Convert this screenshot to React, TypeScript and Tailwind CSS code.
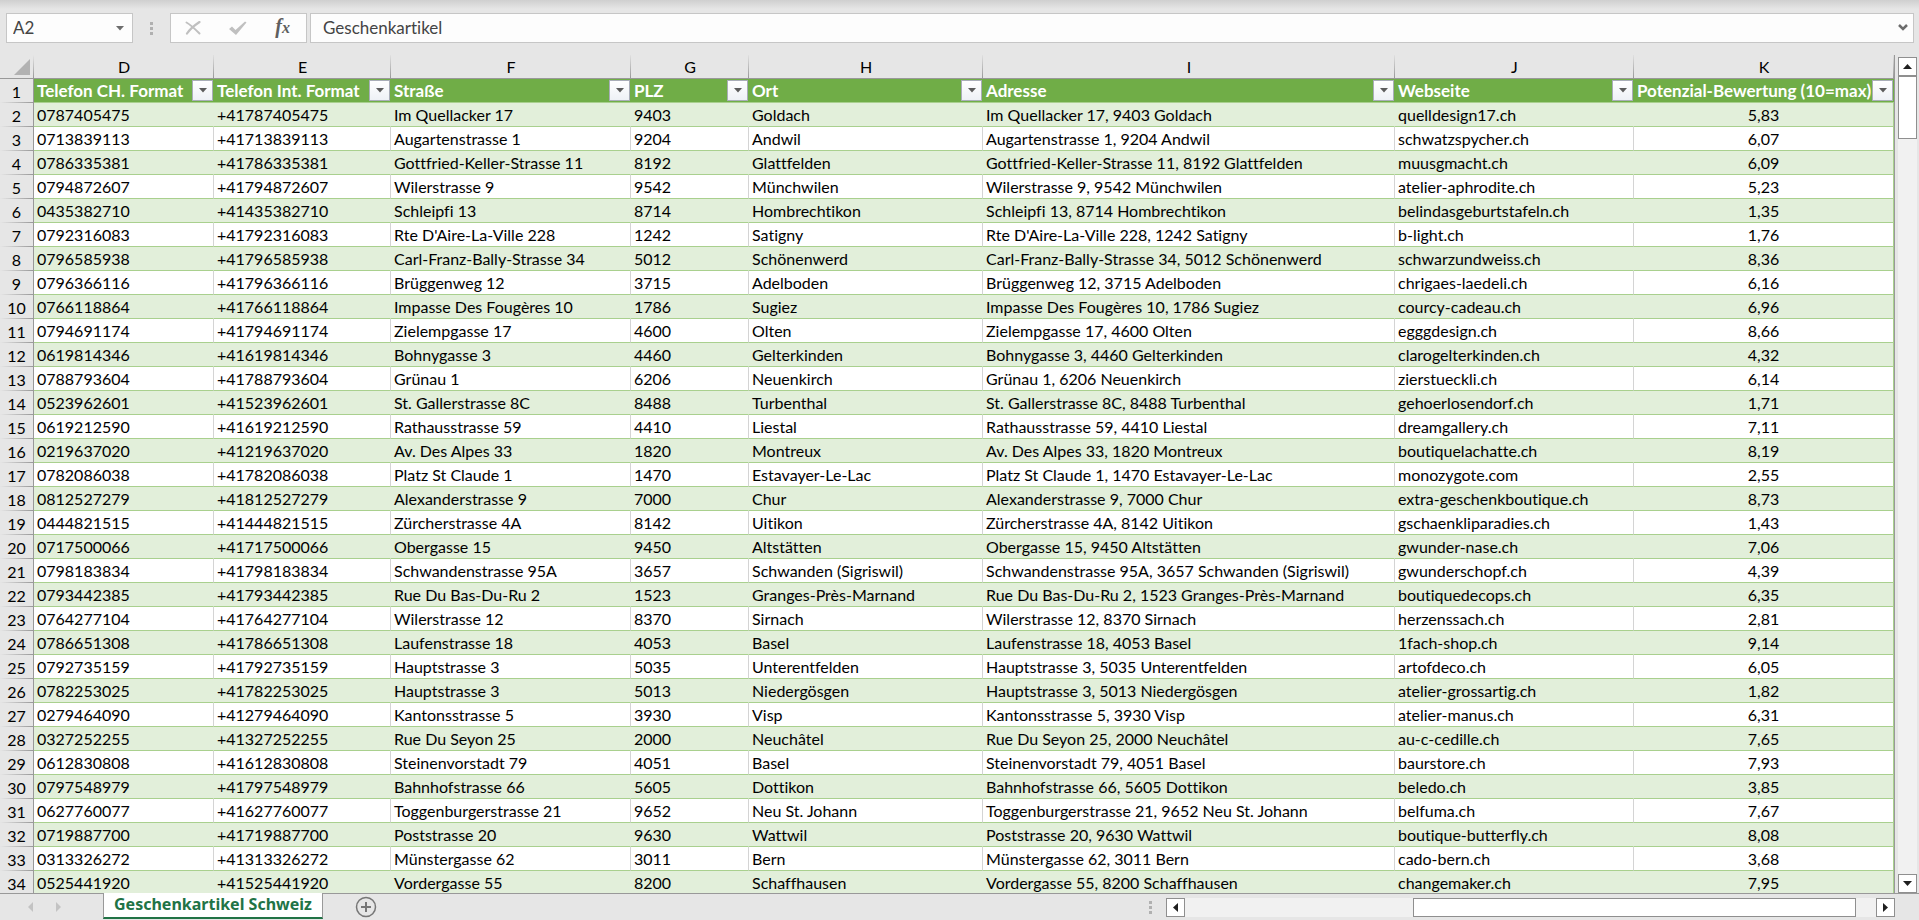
import type { ReactNode } from 'react';

const COLUMNS: { id: string; label: string; width: string }[] = [
  { id: 'D', label: 'Telefon CH. Format', width: 'w-[180px]' },
  { id: 'E', label: 'Telefon Int. Format', width: 'w-[177px]' },
  { id: 'F', label: 'Straße', width: 'w-[240px]' },
  { id: 'G', label: 'PLZ', width: 'w-[118px]' },
  { id: 'H', label: 'Ort', width: 'w-[234px]' },
  { id: 'I', label: 'Adresse', width: '' },
  { id: 'J', label: 'Webseite', width: 'w-[239px]' },
  { id: 'K', label: 'Potenzial-Bewertung (10=max)', width: 'w-[260px]' },
];

// phone without the leading zero, street, postcode, town, website, rating
const SHOPS: [string, string, string, string, string, string][] = [
  ['787405475', 'Im Quellacker 17', '9403', 'Goldach', 'quelldesign17.ch', '5,83'],
  ['713839113', 'Augartenstrasse 1', '9204', 'Andwil', 'schwatzspycher.ch', '6,07'],
  ['786335381', 'Gottfried-Keller-Strasse 11', '8192', 'Glattfelden', 'muusgmacht.ch', '6,09'],
  ['794872607', 'Wilerstrasse 9', '9542', 'Münchwilen', 'atelier-aphrodite.ch', '5,23'],
  ['435382710', 'Schleipfi 13', '8714', 'Hombrechtikon', 'belindasgeburtstafeln.ch', '1,35'],
  ['792316083', "Rte D'Aire-La-Ville 228", '1242', 'Satigny', 'b-light.ch', '1,76'],
  ['796585938', 'Carl-Franz-Bally-Strasse 34', '5012', 'Schönenwerd', 'schwarzundweiss.ch', '8,36'],
  ['796366116', 'Brüggenweg 12', '3715', 'Adelboden', 'chrigaes-laedeli.ch', '6,16'],
  ['766118864', 'Impasse Des Fougères 10', '1786', 'Sugiez', 'courcy-cadeau.ch', '6,96'],
  ['794691174', 'Zielempgasse 17', '4600', 'Olten', 'egggdesign.ch', '8,66'],
  ['619814346', 'Bohnygasse 3', '4460', 'Gelterkinden', 'clarogelterkinden.ch', '4,32'],
  ['788793604', 'Grünau 1', '6206', 'Neuenkirch', 'zierstueckli.ch', '6,14'],
  ['523962601', 'St. Gallerstrasse 8C', '8488', 'Turbenthal', 'gehoerlosendorf.ch', '1,71'],
  ['619212590', 'Rathausstrasse 59', '4410', 'Liestal', 'dreamgallery.ch', '7,11'],
  ['219637020', 'Av. Des Alpes 33', '1820', 'Montreux', 'boutiquelachatte.ch', '8,19'],
  ['782086038', 'Platz St Claude 1', '1470', 'Estavayer-Le-Lac', 'monozygote.com', '2,55'],
  ['812527279', 'Alexanderstrasse 9', '7000', 'Chur', 'extra-geschenkboutique.ch', '8,73'],
  ['444821515', 'Zürcherstrasse 4A', '8142', 'Uitikon', 'gschaenkliparadies.ch', '1,43'],
  ['717500066', 'Obergasse 15', '9450', 'Altstätten', 'gwunder-nase.ch', '7,06'],
  ['798183834', 'Schwandenstrasse 95A', '3657', 'Schwanden (Sigriswil)', 'gwunderschopf.ch', '4,39'],
  ['793442385', 'Rue Du Bas-Du-Ru 2', '1523', 'Granges-Près-Marnand', 'boutiquedecops.ch', '6,35'],
  ['764277104', 'Wilerstrasse 12', '8370', 'Sirnach', 'herzenssach.ch', '2,81'],
  ['786651308', 'Laufenstrasse 18', '4053', 'Basel', '1fach-shop.ch', '9,14'],
  ['792735159', 'Hauptstrasse 3', '5035', 'Unterentfelden', 'artofdeco.ch', '6,05'],
  ['782253025', 'Hauptstrasse 3', '5013', 'Niedergösgen', 'atelier-grossartig.ch', '1,82'],
  ['279464090', 'Kantonsstrasse 5', '3930', 'Visp', 'atelier-manus.ch', '6,31'],
  ['327252255', 'Rue Du Seyon 25', '2000', 'Neuchâtel', 'au-c-cedille.ch', '7,65'],
  ['612830808', 'Steinenvorstadt 79', '4051', 'Basel', 'baurstore.ch', '7,93'],
  ['797548979', 'Bahnhofstrasse 66', '5605', 'Dottikon', 'beledo.ch', '3,85'],
  ['627760077', 'Toggenburgerstrasse 21', '9652', 'Neu St. Johann', 'belfuma.ch', '7,67'],
  ['719887700', 'Poststrasse 20', '9630', 'Wattwil', 'boutique-butterfly.ch', '8,08'],
  ['313326272', 'Münstergasse 62', '3011', 'Bern', 'cado-bern.ch', '3,68'],
  ['525441920', 'Vordergasse 55', '8200', 'Schaffhausen', 'changemaker.ch', '7,95'],
];

function Dots() {
  return (
    <span className="flex flex-col gap-[2px]">
      <span className="size-[3px] bg-[#b0b0b0]" />
      <span className="size-[3px] bg-[#b0b0b0]" />
      <span className="size-[3px] bg-[#b0b0b0]" />
    </span>
  );
}

function ScrollButton({ label, d }: { label: string; d: string }) {
  return (
    <button
      type="button"
      aria-label={label}
      className="flex size-[19px] shrink-0 items-center justify-center border border-[#8f8f8f] bg-white"
    >
      <svg width="11" height="11" viewBox="0 0 11 11" fill="#1f1f1f">
        <path d={d} />
      </svg>
    </button>
  );
}

function FormulaBar() {
  return (
    <header className="flex h-[55px] shrink-0 bg-[linear-gradient(#cfcfcf,#e6e6e6_9px)] pt-[13px] pr-[5px] pl-[6px] text-[17px] text-[#444]">
      <div className="flex h-[30px] w-[127px] items-center border border-[#c6c6c6] bg-[#fdfdfd] pr-2">
        <input
          aria-label="Name Box"
          defaultValue="A2"
          className="w-full min-w-0 flex-1 bg-transparent pl-[6px] outline-none"
        />
        <button type="button" aria-label="Open name list">
          <svg width="8" height="5" viewBox="0 0 8 5" fill="#6d6d6d">
            <path d="M0 0h8L4 4.500z" />
          </svg>
        </button>
      </div>
      <div className="flex h-[30px] w-[37px] items-center justify-center">
        <Dots />
      </div>
      <div className="flex h-[30px] w-[137px] items-center justify-between border border-[#c6c6c6] bg-[#fdfdfd] pr-4 pl-[14px]">
        <button type="button" aria-label="Cancel">
          <svg width="16" height="14" viewBox="0 0 16 14" fill="none" stroke="#c0c0c0" strokeLinecap="round">
            <path d="M1.500 1.500C6 4 11 9 14.500 12.500" strokeWidth="2" />
            <path d="M14.500 1C10 4 5 8 2 12.500" strokeWidth="2.200" />
          </svg>
        </button>
        <button type="button" aria-label="Enter">
          <svg width="18" height="14" viewBox="0 0 18 14" fill="#c0c0c0">
            <path d="M0 8l3-2.500 3.500 3.500L16 0.500l1.500 1L7 14z" />
          </svg>
        </button>
        <button
          type="button"
          aria-label="Insert function"
          className="font-['Liberation_Serif',serif] text-xl leading-5 font-bold text-[#5f5f5f] italic"
        >
          f<span className="text-base">x</span>
        </button>
      </div>
      <div className="ml-[3px] flex h-[30px] min-w-0 flex-1 items-center border border-[#c6c6c6] bg-[#fdfdfd] pr-[5px]">
        <input
          aria-label="Formula"
          defaultValue="Geschenkartikel"
          className="min-w-0 flex-1 bg-transparent pl-3 outline-none"
        />
        <button type="button" aria-label="Expand formula bar">
          <svg width="10" height="8" viewBox="0 0 10 8" fill="none" stroke="#6d6d6d" strokeWidth="2.500">
            <path d="M1 1l4 4 4-4" />
          </svg>
        </button>
      </div>
    </header>
  );
}

function RowNumber({ children }: { children: ReactNode }) {
  return (
    <th
      scope="row"
      className="h-6 border-r border-[#999] bg-[#e6e6e6] bg-[linear-gradient(to_right,#e6e6e6,#999)] bg-size-[100%_1px] bg-bottom bg-no-repeat p-0 text-center font-normal"
    >
      {children}
    </th>
  );
}

function Sheet() {
  return (
    <div className="min-w-0 flex-1 overflow-hidden border-r border-[#999]">
      <table className="w-full min-w-[1700px] table-fixed border-separate border-spacing-0 leading-[23px] whitespace-nowrap text-black">
        <colgroup>
          <col className="w-[34px]" />
          {COLUMNS.map((c) => (
            <col key={c.id} className={c.width} />
          ))}
        </colgroup>
        <thead>
          <tr className="h-6">
            <td className="border-b border-[#999] bg-[linear-gradient(#e6e6e6,#999)] bg-size-[1px_100%] bg-right bg-no-repeat p-0">
              <button type="button" aria-label="Select all" className="flex w-full justify-end pr-1">
                <svg width="16" height="16" viewBox="0 0 16 16" fill="#b2b2b2">
                  <path d="M16 0v16H0z" />
                </svg>
              </button>
            </td>
            {COLUMNS.map((c) => (
              <th
                key={c.id}
                scope="col"
                className="border-b border-[#999] bg-[linear-gradient(#e0e0e0,#999)] bg-size-[1px_100%] bg-right bg-no-repeat p-0 font-normal"
              >
                {c.id}
              </th>
            ))}
          </tr>
          <tr className="h-6">
            <RowNumber>1</RowNumber>
            {COLUMNS.map((c) => (
              <th
                key={c.id}
                scope="col"
                className="border-b border-[#a9d08e] bg-[#70ad47] p-0 text-left text-[17px] font-bold text-white"
              >
                <div className="flex h-[23px] items-center justify-between pr-px pl-[3px]">
                  {c.label}
                  <button
                    type="button"
                    aria-label={`Filter ${c.label}`}
                    className="flex size-[21px] shrink-0 items-center justify-center border border-[#a9adb8] bg-linear-to-b from-white to-[#eef1f6]"
                  >
                    <svg width="8" height="5" viewBox="0 0 8 5" fill="#5c5c5c">
                      <path d="M0 0h8L4 4.500z" />
                    </svg>
                  </button>
                </div>
              </th>
            ))}
          </tr>
        </thead>
        <tbody>
          {SHOPS.map(([phone, street, zip, town, site, rating], i) => {
            const cells = [`0${phone}`, `+41${phone}`, street, zip, town, `${street}, ${zip} ${town}`, site, rating];
            return (
              <tr key={phone} className="group h-6 odd:bg-[#e2efda] even:bg-white">
                <RowNumber>{i + 2}</RowNumber>
                {cells.map((text, n) => (
                  <td
                    key={COLUMNS[n].id}
                    className="border-r border-b border-b-[#a9d08e] p-0 pl-[3px] group-odd:border-r-[#e2efda] group-even:border-r-[#d4d4d4] last:border-r-[#a9d08e]! last:pl-0 last:text-center"
                  >
                    {text}
                  </td>
                ))}
              </tr>
            );
          })}
        </tbody>
      </table>
    </div>
  );
}

function VerticalScroll() {
  return (
    <div className="flex w-6 shrink-0 flex-col items-center bg-[#e6e6e6] pt-[2px]">
      <ScrollButton label="Scroll up" d="M5.500 3L10 8H1z" />
      <div className="flex w-[19px] flex-1 flex-col bg-[#f1f1f1]">
        <div className="h-[63px] border border-[#8f8f8f] bg-white" />
      </div>
      <ScrollButton label="Scroll down" d="M5.500 8L1 3h9z" />
    </div>
  );
}

function TabBar() {
  return (
    <footer className="flex h-[27px] shrink-0 bg-[#e6e6e6]">
      <div className="flex min-w-0 flex-1 border-t border-[#999]">
        <div className="flex w-[103px] items-center gap-[23px] pl-7">
          <button type="button" aria-label="Previous sheet">
            <svg width="5" height="10" viewBox="0 0 5 10" fill="#c3c3c3">
              <path d="M5 0v10L0 5z" />
            </svg>
          </button>
          <button type="button" aria-label="Next sheet">
            <svg width="5" height="10" viewBox="0 0 5 10" fill="#c3c3c3">
              <path d="M0 0v10l5-5z" />
            </svg>
          </button>
        </div>
        <button
          type="button"
          className="-mt-px h-[26px] w-[220px] border-x border-b-2 border-x-[#999] border-b-[#217346] bg-white pb-[2px] font-['Noto_Sans',sans-serif] text-base leading-[22px] font-bold text-[#217346]"
        >
          Geschenkartikel Schweiz
        </button>
        <button type="button" aria-label="New sheet" className="ml-8 flex items-center">
          <svg width="22" height="22" viewBox="0 0 22 22" fill="none" stroke="#767676">
            <circle cx="11" cy="11" r="9.500" strokeWidth="1.500" />
            <path d="M11 6v10M6 11h10" strokeWidth="2" />
          </svg>
        </button>
      </div>
      <div className="flex w-[770px] shrink-0 items-center border-t border-[#999] pr-6">
        <Dots />
        <div className="ml-[14px] flex flex-1 bg-[#f1f1f1]">
          <ScrollButton label="Scroll left" d="M3 5.500L8 1v9z" />
          <div className="flex flex-1 justify-end pr-5">
            <div className="w-[443px] border border-[#8f8f8f] bg-white" />
          </div>
          <ScrollButton label="Scroll right" d="M8 5.500L3 10V1z" />
        </div>
      </div>
    </footer>
  );
}

export default function App() {
  return (
    <div className="flex h-screen flex-col overflow-hidden bg-[#e6e6e6] font-[Lato,sans-serif] text-base [font-variant-ligatures:none]">
      <FormulaBar />
      <main className="flex min-h-0 flex-1">
        <Sheet />
        <VerticalScroll />
      </main>
      <TabBar />
    </div>
  );
}
